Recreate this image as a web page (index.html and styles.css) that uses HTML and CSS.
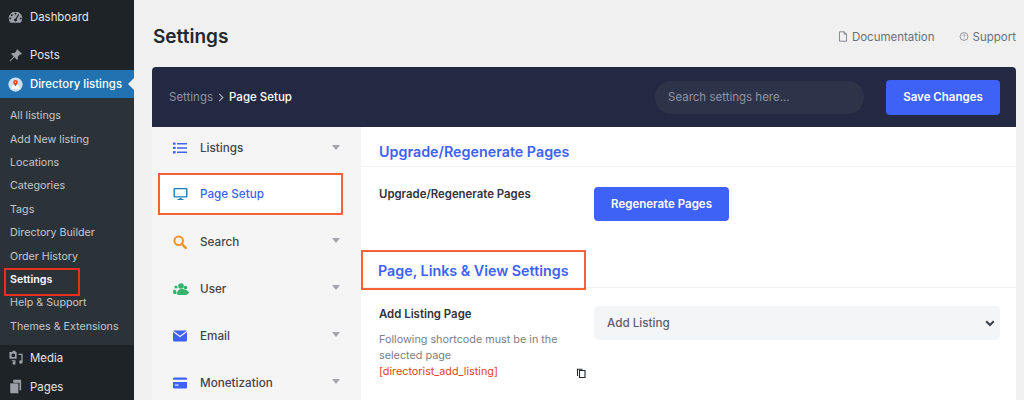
FILE: index.html
```html
<!DOCTYPE html>
<html lang="en">
<head>
<meta charset="utf-8">
<title>Settings</title>
<link rel="stylesheet" href="styles.css">
</head>
<body>
<div class="app">
  <aside class="side">
    <div class="top-item first">
      <svg class="wp-ico" viewBox="0 0 20 20"><path fill-rule="evenodd" d="M10 2a9 9 0 0 0-9 9c0 2.300.9 4.400 2.300 6h13.400a9 9 0 0 0 2.300-6 9 9 0 0 0-9-9zM10 3.600a1.300 1.300 0 1 1 0 2.600 1.300 1.300 0 0 1 0-2.600zM5 5.600a1.300 1.300 0 1 1 0 2.600 1.300 1.300 0 0 1 0-2.600zM3 10a1.300 1.300 0 1 1 0 2.600A1.300 1.300 0 0 1 3 10zm14 0a1.300 1.300 0 1 1 0 2.600 1.300 1.300 0 0 1 0-2.600zM13.500 5.500l1.500.8-3.300 5.800a2 2 0 1 1-1.500-.9z"/></svg>
      <span>Dashboard</span>
    </div>
    <div class="top-item posts">
      <svg class="wp-ico" viewBox="0 0 20 20"><path d="M12.300 1.500l6.200 6.200-1.300 1.300-1-.6-3.200 3.200c.6 1.500.3 3.200-.8 4.400L8.600 12.400l-5.800 5.700-.9-.9 5.700-5.800-3.600-3.600c1.200-1.100 2.900-1.400 4.400-.8l3.200-3.200-.6-1z"/></svg>
      <span>Posts</span>
    </div>
    <div class="top-item current">
      <svg class="wp-ico dir" viewBox="0 0 20 20"><circle cx="10" cy="10" r="9.500" fill="#cfe0f0"/><path d="M4.500 15.500h11l-2-4.500h-7z" fill="#fff"/><circle cx="10" cy="7" r="3" fill="#e2401c"/><circle cx="10" cy="7" r="1" fill="#fff"/><path d="M8 9h4l-2 3.500z" fill="#e2401c"/></svg>
      <span>Directory listings</span>
      <i class="notch"></i>
    </div>
    <ul class="sub">
      <li>All listings</li>
      <li>Add New listing</li>
      <li>Locations</li>
      <li>Categories</li>
      <li>Tags</li>
      <li>Directory Builder</li>
      <li>Order History</li>
      <li class="on"><span class="red-box">Settings</span></li>
      <li>Help &amp; Support</li>
      <li>Themes &amp; Extensions</li>
    </ul>
    <div class="top-item media">
      <svg class="wp-ico" viewBox="0 0 20 20"><path fill-rule="evenodd" d="M2 2.500h3.500l1-1.500h3l1 1.500h1v9H2zM7 4.500a2.500 2.500 0 1 0 0 5 2.500 2.500 0 0 0 0-5z"/><path d="M14 5h5.500v11a2.300 2.300 0 1 1-1.700-2.200V6.800H14z"/><path d="M5 13.500h5v4a2 2 0 1 1-1.500-1.900v-.6H5z"/></svg>
      <span>Media</span>
    </div>
    <div class="top-item pages">
      <svg class="wp-ico" viewBox="0 0 20 20"><path d="M7 1h10.500v14H15.300V5H7z"/><path d="M3 5.800h10.800V19H3z"/></svg>
      <span>Pages</span>
    </div>
  </aside>

  <main class="main">
    <header class="page-head">
      <h1>Settings</h1>
      <nav class="links">
        <a><svg class="link-ico" viewBox="0 0 12 14"><path d="M1.500 1h6l3 3v9h-9zM7.500 1v3h3" fill="none" stroke="#6b6f76" stroke-width="1"/></svg>Documentation</a>
        <a><svg class="link-ico" viewBox="0 0 14 14"><circle cx="7" cy="7" r="5.500" fill="none" stroke="#6b6f76" stroke-width="1"/><path d="M5.600 5.800a1.400 1.400 0 1 1 2 1.300c-.4.200-.6.500-.6.900M7 9.300v.7" fill="none" stroke="#6b6f76" stroke-width=".9"/></svg>Support</a>
      </nav>
    </header>

    <section class="panel">
      <div class="panel-bar">
        <div class="crumb"><span class="dim">Settings</span><svg class="crumb-sep" viewBox="0 0 6 10"><path d="M1 1l4 4-4 4" fill="none" stroke="#aab0c0" stroke-width="1.300"/></svg><b>Page Setup</b></div>
        <div class="search">Search settings here...</div>
        <button class="btn save">Save Changes</button>
      </div>
      <div class="panel-body">
        <nav class="snav">
          <div class="snav-item">
            <svg class="s-ico" viewBox="0 0 14 12"><g fill="#3e62f5"><rect x="0" y="0.500" width="2.600" height="2.300" rx=".5"/><rect x="0" y="4.800" width="2.600" height="2.300" rx=".5"/><rect x="0" y="9.100" width="2.600" height="2.300" rx=".5"/><rect x="4" y="0.900" width="10" height="1.600" rx=".4"/><rect x="4" y="5.200" width="10" height="1.600" rx=".4"/><rect x="4" y="9.500" width="10" height="1.600" rx=".4"/></g></svg>
            <span>Listings</span><i class="caret"></i>
          </div>
          <div class="snav-item active">
            <svg class="s-ico" viewBox="0 0 15 13"><path d="M1.500.5h12a1 1 0 0 1 1 1v7.500a1 1 0 0 1-1 1h-12a1 1 0 0 1-1-1V1.500a1 1 0 0 1 1-1zm.4 1.300v6.900h11.200V1.800z" fill="#1c7cb5"/><path d="M6.500 10.500h2v1h2v1h-6v-1h2z" fill="#1c7cb5"/></svg>
            <span>Page Setup</span>
          </div>
          <div class="snav-item">
            <svg class="s-ico" viewBox="0 0 14 14"><circle cx="5.700" cy="5.700" r="4.300" fill="none" stroke="#f7922d" stroke-width="2"/><path d="M8.800 8.800l4 4" stroke="#f7922d" stroke-width="2.400" stroke-linecap="round"/></svg>
            <span>Search</span><i class="caret"></i>
          </div>
          <div class="snav-item">
            <svg class="s-ico wide" viewBox="0 0 16 12"><g fill="#33b36b"><circle cx="8" cy="3" r="2.800"/><circle cx="3" cy="4" r="1.600"/><circle cx="1.500" cy="8" r="1.500"/><circle cx="12.500" cy="4.500" r="1.800"/><path d="M4 11c0-3 1.800-5 4.500-5s6.500 1 7.500 3.500c-.5 1.500-2 2.500-4 2.500H5z"/><path d="M0 10c.5-1.500 2-2 3.500-1.700V11H.8z"/></g></svg>
            <span>User</span><i class="caret"></i>
          </div>
          <div class="snav-item">
            <svg class="s-ico" viewBox="0 0 14 11"><path d="M1 0h12a1 1 0 0 1 .7.300L7 5.300.3.300A1 1 0 0 1 1 0z" fill="#3e62f5"/><path d="M0 1.500l7 5.200 7-5.200V10a1 1 0 0 1-1 1H1a1 1 0 0 1-1-1z" fill="#3e62f5"/></svg>
            <span>Email</span><i class="caret"></i>
          </div>
          <div class="snav-item">
            <svg class="s-ico" viewBox="0 0 15 12"><path d="M1.500 0h12A1.500 1.500 0 0 1 15 1.500V2.500H0V1.500A1.500 1.500 0 0 1 1.500 0z" fill="#3e62f5"/><path d="M0 5h15v5.500a1.500 1.500 0 0 1-1.500 1.500h-12A1.500 1.500 0 0 1 0 10.500z" fill="#3e62f5"/><rect x="2" y="7.500" width="4" height="1.500" fill="#cfd8ff"/></svg>
            <span>Monetization</span><i class="caret"></i>
          </div>
        </nav>
        <div class="content">
          <h2 class="sec first-sec">Upgrade/Regenerate Pages</h2>
          <div class="row regen">
            <div class="lab"><b>Upgrade/Regenerate Pages</b></div>
            <button class="btn regen-btn">Regenerate Pages</button>
          </div>
          <h2 class="sec boxed"><span>Page, Links &amp; View Settings</span></h2>
          <div class="row add">
            <div class="lab">
              <b>Add Listing Page</b>
              <p>Following shortcode must be in the selected page</p>
              <div class="code"><span>[directorist_add_listing]</span>
                <svg class="copy" viewBox="0 0 10 10"><path d="M3.500 2.500h5.500v7h-5.500z" fill="none" stroke="#23282d" stroke-width="1.100"/><path d="M1 8V.7h5.500v1H2v6.300z" fill="#23282d"/></svg>
              </div>
            </div>
            <div class="select">Add Listing<svg class="chev" viewBox="0 0 10 7"><path d="M1.200 1.300L5 5l3.800-3.700" fill="none" stroke="#3a4049" stroke-width="2"/></svg></div>
          </div>
        </div>
      </div>
    </section>
  </main>
</div>
</body>
</html>
```

FILE: styles.css
```css
* { box-sizing: border-box; }
html, body { margin: 0; height: 400px; overflow: hidden; }
body { font-family: Inter, "Liberation Sans", sans-serif; background: #f0f0f1; color: #30343b; }
.app { display: flex; height: 400px; overflow: hidden; }

.side { width: 134px; flex: none; background: #1d2327; color: #eceded; height: 400px; overflow: hidden; }
.top-item { display: flex; align-items: center; gap: 7px; padding-left: 8px; position: relative; font-size: 11.400px; color: #e3e5e6; }
.first { height: 34px; }
.posts { height: 36px; padding-top: 6px; }
.current { height: 28px; background: #2271b1; color: #fff; font-weight: 500; }
.wp-ico { width: 15px; height: 15px; fill: #9ca1a7; flex: none; }
.notch { position: absolute; right: 0; top: 8px; border: 6px solid transparent; border-right-color: #f0f0f1; border-left: 0; }
.sub { margin: 0; padding: 6px 0 7px; list-style: none; background: #2c3338; color: #c3c6c9; font-size: 10.700px; }
.sub li { height: 23.400px; padding-left: 10px; display: flex; align-items: center; white-space: nowrap; }
.sub .on { color: #fff; font-weight: 600; }
.red-box { position: relative; }
.red-box::after { content: ""; position: absolute; left: -6px; top: -5px; width: 72px; height: 24px; border: 2px solid #e8301c; }
.media { height: 28px; padding-bottom: 2px; }
.pages { height: 28px; }

.main { flex: 1; min-width: 0; padding: 0 8px 0 18px; }
.page-head { display: flex; align-items: center; justify-content: space-between; height: 67px; padding: 6px 0 0; }
h1 { margin: 0; font-size: 19px; font-weight: 600; color: #23282d; padding-left: 1px; }
.links { display: flex; gap: 24px; font-size: 11.500px; color: #6b6f76; margin-top: 0; }
.links a { display: flex; align-items: center; gap: 4px; }
.link-ico { width: 10px; height: 11px; }

.panel { border-radius: 4px 4px 0 0; overflow: hidden; background: #fff; }
.panel-bar { height: 60px; background: #232942; display: flex; align-items: center; padding: 0 16px 0 17px; }
.crumb { display: flex; align-items: center; font-size: 11.500px; flex: none; width: 486px; }
.dim { color: #8c92a6; }
.crumb-sep { width: 6px; height: 9px; margin: 0 5px 0 5px; }
.crumb b { color: #fff; font-weight: 500; }
.search { width: 209px; height: 33px; flex: none; border-radius: 17px; background: #2d3349; color: #8d93a5; font-size: 11.500px; display: flex; align-items: center; padding-left: 13px; }
.btn { border: 0; background: #3e62f5; color: #fff; font-family: inherit; font-size: 11.500px; font-weight: 600; border-radius: 4px; flex: none; }
.save { width: 114px; height: 35px; margin-left: 22px; }

.panel-body { display: flex; }
.snav { width: 209px; flex: none; background: #f6f5f5; color: #3f444c; font-size: 11.700px; font-weight: 500; height: 273px; }
.snav-item { height: 47px; display: flex; align-items: center; padding-left: 21px; position: relative; }
.snav-item:first-child { height: 42px; }
.snav-item span { margin-left: 13px; }
.s-ico { width: 14px; height: 14px; flex: none; }
.s-ico.wide { width: 16px; margin-right: -2px; }
.caret { position: absolute; left: 180px; top: 20px; border: 4px solid transparent; border-top: 5px solid #a4a6ac; border-bottom: 0; }
.snav-item:first-child .caret { top: 18px; }
.active { background: #fff; color: #3e62f5; border: 2px solid #f4623a; margin: 4px 0 3px 6px; width: 185px; padding-left: 13px; height: 42px; }
.active .s-ico { width: 15px; margin-right: -1px; }
.content { flex: 1; background: #fff; min-width: 0; }
h2.sec { margin: 0; color: #3e62f5; font-size: 14.300px; font-weight: 600; }
.first-sec { padding: 16px 18px 0; height: 40px; border-bottom: 1px solid #f1f1f3; line-height: 17px; }
.row { display: flex; padding: 0 2px 0 18px; }
.regen { height: 83px; padding-top: 20px; }
.lab { width: 215px; flex: none; font-size: 11.400px; }
.lab b { font-weight: 600; color: #30343b; display: block; }
.regen-btn { width: 135px; height: 34px; }
.regen .lab b { margin-top: 0; }
.boxed { height: 38px; border-bottom: 1px solid #f1f1f3; }
.boxed span { display: flex; align-items: center; height: 40px; width: 225px; border: 2px solid #f4623a; padding-left: 15px; white-space: nowrap; }
.add { padding-top: 19px; }
.add .lab b { line-height: 14px; }
.lab p { margin: 11px 0 0; color: #7b7f86; font-size: 10.800px; line-height: 16px; font-weight: 400; width: 190px; }
.code { color: #e8411f; font-size: 10.800px; line-height: 16px; position: relative; }
.copy { position: absolute; left: 197px; top: 4px; width: 10px; height: 10px; }
.select { width: 406px; height: 34px; margin-top: -1px; background: #f4f5f6; border-radius: 5px; display: flex; align-items: center; justify-content: space-between; padding: 0 5px 0 13px; font-size: 11.700px; font-weight: 500; color: #5c6069; }
.chev { width: 10px; height: 7px; }
```
